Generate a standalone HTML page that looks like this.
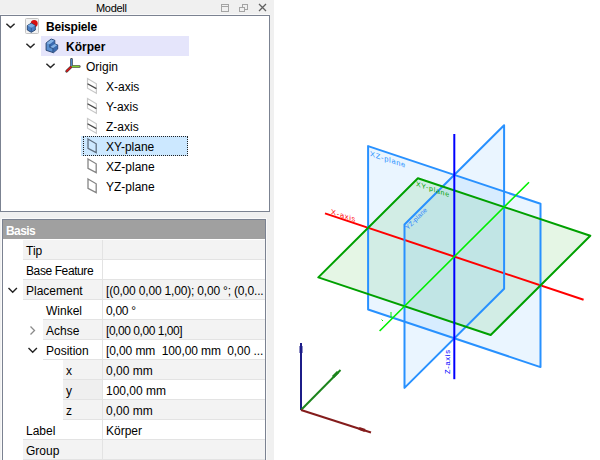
<!DOCTYPE html>
<html><head><meta charset="utf-8">
<style>
*{margin:0;padding:0;box-sizing:border-box}
html,body{width:600px;height:460px;overflow:hidden;background:#fff;font-family:"Liberation Sans",sans-serif;font-size:12px;color:#000}
.t{position:absolute;white-space:nowrap;line-height:14px}
.b{font-weight:bold}
.box{position:absolute}
svg{position:absolute;left:0;top:0}
</style></head><body>
<div class="box" style="left:0;top:0;width:274px;height:460px;background:#f0f0f0"></div>
<div class="t" style="left:96px;top:1px;font-size:11px;letter-spacing:-0.3px">Modell</div>
<div class="box" style="left:0;top:14px;width:270px;height:1px;background:#f9f9f9"></div>
<div class="box" style="left:0;top:15px;width:270px;height:197px;background:#fff;border:1px solid #7b8291"></div>
<div class="box" style="left:41px;top:36px;width:148px;height:20px;background:#e5e5fb"></div>
<div class="box" style="left:81px;top:136px;width:107px;height:20px;background:#cce8ff"></div><div class="box" style="left:83px;top:136px;width:105px;height:20px;border:1px dotted #222"></div>
<div class="t b" style="left:46px;top:20px;letter-spacing:-0.2px">Beispiele</div><div class="t b" style="left:66px;top:40px">Körper</div><div class="t" style="left:86px;top:60px">Origin</div><div class="t" style="left:106px;top:80px">X-axis</div><div class="t" style="left:106px;top:100px">Y-axis</div><div class="t" style="left:106px;top:120px">Z-axis</div><div class="t" style="left:106px;top:140px">XY-plane</div><div class="t" style="left:106px;top:160px">XZ-plane</div><div class="t" style="left:106px;top:180px">YZ-plane</div>
<div class="box" style="left:1px;top:218px;width:266px;height:250px;background:#fafafa"></div>
<div class="box" style="left:2px;top:219px;width:264px;height:250px;background:#fff;border:1px solid #7b8291"></div>
<div class="box" style="left:3px;top:220px;width:262px;height:19px;background:#a0a0a0"></div>
<div class="t b" style="left:6px;top:224px;color:#fff;letter-spacing:-0.6px">Basis</div>
<div class="box" style="left:23px;top:240px;width:242px;height:20px;background:#f3f3f3;border-bottom:1px solid #e3e3e3"></div><div class="t" style="left:26px;top:244px">Tip</div><div class="box" style="left:23px;top:260px;width:242px;height:20px;background:#ffffff;border-bottom:1px solid #e3e3e3"></div><div class="t" style="left:26px;top:264px;letter-spacing:-0.4px">Base Feature</div><div class="box" style="left:23px;top:280px;width:242px;height:20px;background:#f3f3f3;border-bottom:1px solid #e3e3e3"></div><div class="t" style="left:26px;top:284px">Placement</div><div class="t" style="left:106px;top:284px;letter-spacing:-0.18px">[(0,00 0,00 1,00); 0,00 °; (0,0...</div><div class="box" style="left:43px;top:300px;width:222px;height:20px;background:#ffffff;border-bottom:1px solid #e3e3e3"></div><div class="t" style="left:46px;top:304px">Winkel</div><div class="t" style="left:106px;top:304px;letter-spacing:-0.3px">0,00 °</div><div class="box" style="left:43px;top:320px;width:222px;height:20px;background:#f3f3f3;border-bottom:1px solid #e3e3e3"></div><div class="t" style="left:46px;top:324px">Achse</div><div class="t" style="left:106px;top:324px;letter-spacing:-0.45px">[0,00 0,00 1,00]</div><div class="box" style="left:43px;top:340px;width:222px;height:20px;background:#ffffff;border-bottom:1px solid #e3e3e3"></div><div class="t" style="left:46px;top:344px">Position</div><div class="t" style="left:106px;top:344px;letter-spacing:-0.1px">[0,00 mm&nbsp; 100,00 mm&nbsp; 0,00 ...</div><div class="box" style="left:63px;top:360px;width:202px;height:20px;background:#f3f3f3;border-bottom:1px solid #e3e3e3"></div><div class="t" style="left:66px;top:364px">x</div><div class="t" style="left:106px;top:364px">0,00 mm</div><div class="box" style="left:63px;top:380px;width:202px;height:20px;background:#ffffff;border-bottom:1px solid #e3e3e3"></div><div class="box" style="left:63px;top:380px;width:39px;height:20px;background:#efefef;border-bottom:1px solid #e3e3e3"></div><div class="t" style="left:66px;top:384px">y</div><div class="t" style="left:106px;top:384px">100,00 mm</div><div class="box" style="left:63px;top:400px;width:202px;height:20px;background:#f3f3f3;border-bottom:1px solid #e3e3e3"></div><div class="t" style="left:66px;top:404px">z</div><div class="t" style="left:106px;top:404px">0,00 mm</div><div class="box" style="left:23px;top:420px;width:242px;height:20px;background:#ffffff;border-bottom:1px solid #e3e3e3"></div><div class="t" style="left:26px;top:424px">Label</div><div class="t" style="left:106px;top:424px">Körper</div><div class="box" style="left:23px;top:440px;width:242px;height:20px;background:#f3f3f3;border-bottom:1px solid #e3e3e3"></div><div class="t" style="left:26px;top:444px">Group</div>
<div class="box" style="left:102px;top:240px;width:1px;height:230px;background:#e3e3e3"></div>
<svg width="274" height="460">
  <g fill="none" stroke="#a4a4a4" stroke-width="1" shape-rendering="crispEdges">
    <rect x="221.5" y="4.5" width="7" height="7"/>
    <line x1="221" y1="6.5" x2="229" y2="6.5"/>
    <rect x="239.5" y="7.5" width="5" height="4"/>
    <path d="M242.5 7.5V4.5H247.5V9.5H244.5"/>
  </g>
  <path d="M259 4L266 11M266 4L259 11" stroke="#606060" stroke-width="1.3"/>
  <path d="M6.4 23.8L10.5 27.6L14.6 23.8" fill="none" stroke="#262626" stroke-width="1.5"/><path d="M26.4 43.8L30.5 47.6L34.6 43.8" fill="none" stroke="#262626" stroke-width="1.5"/><path d="M46.4 63.8L50.5 67.6L54.6 63.8" fill="none" stroke="#262626" stroke-width="1.5"/>
  <path d="M8.5 288L12.7 292.2L16.9 288" fill="none" stroke="#222" stroke-width="1.4"/><path d="M30.5 326.5L34.5 330.5L30.5 334.5" fill="none" stroke="#8a8a8a" stroke-width="1.3"/><path d="M28.500000000000004 348L32.7 352.2L36.900000000000006 348" fill="none" stroke="#222" stroke-width="1.4"/>
  <!-- Beispiele icon -->
  <rect x="25.5" y="18.5" width="13" height="15" rx="1" fill="#f3f3f3" stroke="#c4c4c4"/>
  <circle cx="34.2" cy="23.4" r="3.5" fill="#d81010"/>
  <path d="M27.3 25.6L31.3 23.2L35.3 25.6V30L31.3 32.3L27.3 30Z" fill="#4a7fc4" stroke="#233f6a" stroke-width="0.9"/>
  <path d="M27.6 25.6L31.3 23.5L35 25.6L31.3 27.8Z" fill="#7eaee3"/>
  <path d="M31.3 27.8V32" stroke="#2c4f80" stroke-width="0.7"/>
  <!-- Koerper icon -->
  <path d="M46.1 43L51.1 39L54.8 40.3V44L57.7 44.9V49L53.5 52.7L46.1 50.3Z" fill="#5a8fd0" stroke="#1e3a66" stroke-width="0.9"/>
  <path d="M46.6 43.2L51.1 39.5L54.4 40.7L49.8 44.3Z" fill="#86b3e6"/>
  <path d="M49.8 44.3L54.4 40.8V44.1L49.8 47.4Z" fill="#3a6ab0"/>
  <path d="M49.9 47.3L54.8 44.3L57.3 45.1L52.9 48.2Z" fill="#86b3e6"/>
  <path d="M52.9 48.2L57.3 45.3V49L53.3 52.2Z" fill="#3a6ab0"/>
  <path d="M49.8 44.3V47.4L52.9 48.4V52.4" fill="none" stroke="#1e3a66" stroke-width="0.7"/>
  <!-- Origin icon -->
  <g stroke-linecap="round">
  <path d="M71.5 66.5V59.2M71.5 66.5H79.3M71.5 66.5L66.6 71.3" stroke="#3a3a3a" stroke-width="2.6"/>
  <path d="M71.5 65.8V59.4" stroke="#4f86c6" stroke-width="1.5"/>
  <path d="M72.2 66.5H79" stroke="#80d030" stroke-width="1.5"/>
  <path d="M71 67L66.8 71.1" stroke="#e01414" stroke-width="1.5"/>
  </g>
  <path d="M87.5 78.6L96.4 83.8V93.2L87.5 88.2Z" fill="none" stroke="#c9c9c9" stroke-width="1.2"/><path d="M87.5 83.8L96.4 88.6" stroke="#4a4a4a" stroke-width="1.3"/><path d="M87.5 98.6L96.4 103.8V113.2L87.5 108.2Z" fill="none" stroke="#c9c9c9" stroke-width="1.2"/><path d="M87.5 103.8L96.4 108.6" stroke="#4a4a4a" stroke-width="1.3"/><path d="M87.5 118.6L96.4 123.8V133.2L87.5 128.2Z" fill="none" stroke="#c9c9c9" stroke-width="1.2"/><path d="M87.5 123.8L96.4 128.6" stroke="#4a4a4a" stroke-width="1.3"/>
  <path d="M88 139L96.2 143.8V152.7L88 148.4Z" fill="none" stroke="#5f6f80" stroke-width="1.3"/><path d="M88 159L96.2 163.8V172.7L88 168.4Z" fill="none" stroke="#858585" stroke-width="1.3"/><path d="M88 179L96.2 183.8V192.7L88 188.4Z" fill="none" stroke="#858585" stroke-width="1.3"/>
</svg>
<svg width="600" height="460">
  <g>
    <polygon points="368.1,146.1 540.5,203.7 540.5,367.1 368.1,309.5" fill="#3399ff" fill-opacity="0.1"/>
    <polygon points="404.5,224.5 504.1,125.3 504.1,288.7 404.5,387.9" fill="#3399ff" fill-opacity="0.1"/>
    <polygon points="318.3,277.4 417.9,178.2 590.3,235.8 490.7,335.0" fill="#00aa00" fill-opacity="0.1"/>
  </g>
  <line x1="325.0" y1="213.4" x2="583.6" y2="299.8" stroke="#ff0000" stroke-width="2"/>
  <g fill="none" stroke-width="2" stroke-linejoin="round">
    <polygon points="368.1,146.1 540.5,203.7 540.5,367.1 368.1,309.5" stroke="#2891ff"/>
    <polygon points="404.5,224.5 504.1,125.3 504.1,288.7 404.5,387.9" stroke="#2891ff"/>
    <polygon points="318.3,277.4 417.9,178.2 590.3,235.8 490.7,335.0" stroke="#00a000"/>
  </g>
  <line x1="454.3" y1="379.2" x2="454.3" y2="134.0" stroke="#0000ff" stroke-width="2"/>
  <line x1="379.6" y1="331.0" x2="529.0" y2="182.2" stroke="#00ee00" stroke-width="1.6"/>
  <g font-family="Liberation Sans" font-size="7.5" letter-spacing="0.7">
    <text transform="translate(370,156) skewY(18.4)" fill="#2891ff">XZ-plane</text>
    <text transform="translate(416,186) skewY(18.4)" font-size="7" fill="#00a000">XY-plane</text>
    <text transform="translate(408,230) rotate(-45)" font-size="6.5" letter-spacing="0.2" fill="#1f80ff">YZ-plane</text>
    <text transform="translate(331,214) skewY(18.4)" fill="#ff0000">X-axis</text>
    <text transform="translate(450,374) rotate(-90)" fill="#0000ff">Z-axis</text>
  </g>
  <path d="M381.6 319.6L383 321M391 312V318" fill="none" stroke="#00ee00" stroke-width="1"/>
  <g fill="none" stroke-width="2">
    <line x1="301" y1="410" x2="301" y2="343" stroke="#1c1c88"/>
    <line x1="301" y1="410" x2="340.5" y2="370" stroke="#1c841c"/>
    <line x1="301" y1="410" x2="371" y2="432.5" stroke="#841c1c"/>
  </g>
  <path d="M301 346V353" stroke="#1c1c88" stroke-width="3"/>
  <path d="M333 377L338 372" stroke="#1c841c" stroke-width="3"/>
  <path d="M359 428.3L365 430.5" stroke="#841c1c" stroke-width="3"/>
</svg>
</body></html>
